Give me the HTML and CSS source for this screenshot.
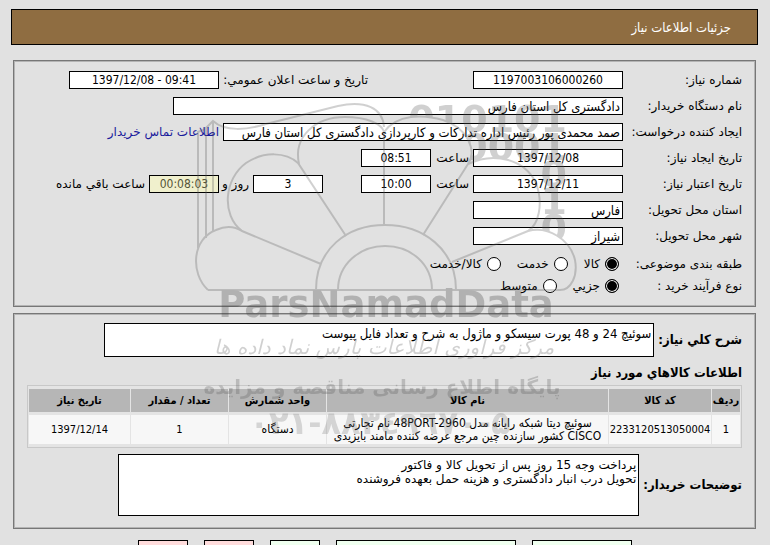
FILE: index.html
```html
<!DOCTYPE html>
<html lang="fa" dir="rtl">
<head>
<meta charset="utf-8">
<title>جزئیات اطلاعات نیاز</title>
<link rel="stylesheet" href="styles.css">
</head>
<body>
<header class="banner"><h1>جزئیات اطلاعات نیاز</h1></header>
<main>
<section class="panel form">
  <div class="row">
    <label class="name" for="number">شماره نیاز:</label>
    <input class="date" id="number" value="1197003106000260" dir="ltr" readonly>
    <label class="announce" for="announced">تاریخ و ساعت اعلان عمومي:</label>
    <input class="date" id="announced" value="1397/12/08 - 09:41" dir="ltr" readonly>
  </div>
  <div class="row">
    <label class="name" for="buyer">نام دستگاه خریدار:</label>
    <input class="buyer" id="buyer" value="دادگستری کل استان فارس" readonly>
  </div>
  <div class="row">
    <label class="name" for="creator">ایجاد کننده درخواست:</label>
    <input class="creator" id="creator" value="صمد محمدی پور رئیس اداره تدارکات و کارپردازی دادگستری کل استان فارس" readonly>
    <a href="#contact">اطلاعات تماس خریدار</a>
  </div>
  <div class="row">
    <label class="name" for="created">تاریخ ایجاد نیاز:</label>
    <input class="date" id="created" value="1397/12/08" dir="ltr" readonly>
    <label class="hour" for="created-hour">ساعت</label>
    <input class="time" id="created-hour" value="08:51" dir="ltr" readonly>
  </div>
  <div class="row">
    <label class="name" for="valid">تاریخ اعتبار نیاز:</label>
    <input class="date" id="valid" value="1397/12/11" dir="ltr" readonly>
    <label class="hour" for="valid-hour">ساعت</label>
    <input class="time" id="valid-hour" value="10:00" dir="ltr" readonly>
    <input class="time days" id="days" value="3" dir="ltr" readonly>
    <label class="and" for="days">روز و</label>
    <input class="time left" id="left" value="00:08:03" dir="ltr" readonly>
    <label for="left">ساعت باقي مانده</label>
  </div>
  <div class="row">
    <label class="name" for="province">استان محل تحویل:</label>
    <input class="place" id="province" value="فارس" readonly>
  </div>
  <div class="row">
    <label class="name" for="city">شهر محل تحویل:</label>
    <input class="place" id="city" value="شیراز" readonly>
  </div>
  <div class="row options">
    <span class="name">طبقه بندی موضوعی:</span>
    <label><input type="radio" name="category" checked>کالا</label>
    <label><input type="radio" name="category">خدمت</label>
    <label><input type="radio" name="category">کالا/خدمت</label>
  </div>
  <div class="row options">
    <span class="name">نوع فرآیند خرید :</span>
    <label><input type="radio" name="process" checked>جزيي</label>
    <label><input type="radio" name="process">متوسط</label>
  </div>
</section>
<section class="panel details">
  <div class="block">
    <label for="summary">شرح کلي نیاز:</label>
    <textarea class="summary" id="summary" readonly>سوئیچ 24 و 48 پورت سیسکو و ماژول به شرح و تعداد فایل پیوست</textarea>
  </div>
  <h2>اطلاعات کالاهاي مورد نیاز</h2>
  <table>
    <colgroup><col class="c-row"><col class="c-code"><col><col class="c-std"><col class="c-std"><col class="c-last"></colgroup>
    <thead><tr><th>ردیف</th><th>کد کالا</th><th>نام کالا</th><th>واحد شمارش</th><th>تعداد / مقدار</th><th>تاریخ نیاز</th></tr></thead>
    <tbody><tr><td>1</td><td>2233120513050004</td><td class="item">سوئیچ دیتا شبکه رایانه مدل 48PORT-2960 نام تجارتی CISCO کشور سازنده چین مرجع عرضه کننده مامند بایزیدی</td><td class="item">دستگاه</td><td>1</td><td>1397/12/14</td></tr></tbody>
  </table>
  <div class="block">
    <label for="notes">توضیحات خریدار:</label>
    <textarea class="notes" id="notes" readonly>پرداخت وجه 15 روز پس از تحویل کالا و فاکتور
تحویل درب انبار دادگستری و هزینه حمل بعهده فروشنده</textarea>
  </div>
</section>
</main>
<footer class="actions">
  <button class="go medium" type="button"></button>
  <button class="go wide" type="button"></button>
  <button class="go" type="button"></button>
  <button class="stop" type="button"></button>
  <button class="stop" type="button"></button>
</footer>
<svg class="watermark" viewBox="190 95 390 355" direction="ltr" aria-hidden="true">
  <mask id="behind" maskUnits="userSpaceOnUse" x="190" y="95" width="390" height="200">
    <rect x="190" y="95" width="390" height="200" fill="#fff"/>
    <path fill="#000" d="M384 132C397 114 423 114 443 120C468 128 477 151 468 164C495 151 525 160 536 183C544 205 538 225 528 231C548 226 570 239 575 260V290H384Z"/>
  </mask>
  <g class="lines">
    <path d="M198 248V132L205 129M206 238V127M213 232V121M205 129L213 121C225 132 247 130 266 124L338 106C365 100 383 108 384 127"/>
    <path d="M208 290C190 273 192 239 216 230C225 226 234 226 242 231L321 264"/>
    <path d="M242 231C221 215 224 179 246 163C264 151 286 152 298 163L346 236"/>
    <path d="M299 164C293 137 315 117 345 117C367 117 382 124 384 132V225"/>
    <path d="M384 132C397 114 423 114 443 120C468 128 477 151 468 164L423 235"/>
    <path d="M468 164C495 151 525 160 536 183C544 205 538 225 528 231L452 262"/>
    <path d="M528 231C548 226 570 239 575 260C578 276 571 290 560 290H208"/>
    <path d="M316 290C316 249 347 225 385 225C423 225 456 249 456 290"/>
    <path d="M338 290C338 264 360 246 385 246C411 246 432 264 432 290"/>
  </g>
  <g class="digits" mask="url(#behind)">
    <text x="567" y="132">010101</text><text x="567" y="160">0001</text>
    <text x="567" y="187">0</text><text x="567" y="214">1</text><text x="567" y="241">0</text>
  </g>
  <text class="brand" x="386" y="317">ParsNamadData</text>
  <text class="script" x="384" y="354">مرکز فرآوری اطلاعات پارس نماد داده ها</text>
  <text class="tag" x="382" y="394">پایگاه اطلاع رسانی مناقصه و مزایده</text>
  <text class="phone" x="380" y="434">۰۲۱-۸۸۳٤۹٦۷۰-۵</text>
</svg>
</body>
</html>
```
FILE: styles.css
```css
* { box-sizing: border-box; }
html { overflow: hidden; }
body {
  margin: 0;
  padding: 9px 12px 0 11px;
  position: relative;
  background: #e1e1e1;
  color: #000;
  font: 12px/14px "DejaVu Sans", sans-serif;
}
input, textarea, button { font: inherit; color: inherit; border-radius: 0; }
.banner {
  height: 36px;
  padding: 2px 26px 0;
  display: flex;
  align-items: center;
  background: #8f6d41;
  border: 1px solid #000;
  color: #fff;
}
.banner h1 { margin: 0; font: 13px/16px "DejaVu Sans Condensed", sans-serif; }
main { padding: 15px 2px 0; display: grid; gap: 6px; }
.panel { border: 1px solid #777; outline: 1px solid #b4b4b4; outline-offset: -2px; }
.form { padding: 10px 13px 9px; }
.row { display: flex; align-items: center; gap: 4px; min-height: 26px; padding-bottom: 8px; white-space: nowrap; }
.row > .name { width: 115px; }
.row input:not([type]) {
  height: 18px;
  padding: 0 2px;
  border: 1px solid #000;
  background: #fff;
  font: 12px/14px "DejaVu Sans Condensed", sans-serif;
  text-align: center;
}
.row .date { width: 150px; }
.row .time { width: 70px; }
.row .buyer, .row .creator, .row .place { font-size: 13px !important; text-align: right !important; }
.row .buyer { width: 450px; }
.row .creator { width: 400px; }
.row .place { width: 150px; }
.row .hour { width: 34px; }
.row .and { width: 26px; }
.row .days { margin-right: 34px; }
.row .announce { width: 145px; margin-right: 101px; }
.row .left { background: #f0f0cd !important; color: #555538; }
a { color: #1a1a9c; text-decoration: none; }
.row.options { min-height: 22px; padding: 0; gap: 16px; }
.options > .name { width: 107px; }
.options label { display: flex; align-items: center; gap: 5px; }
.options input {
  appearance: none;
  width: 14px;
  height: 14px;
  margin: 0;
  border: 1px solid #000;
  border-radius: 50%;
  background: #fff;
}
.options input:checked { background: #000; box-shadow: inset 0 0 0 1px #fff; }
.details { padding: 9px 13px 12px; }
.block { display: flex; align-items: center; gap: 4px; }
.block label, h2 { font: bold 13px/14px "DejaVu Sans Condensed", sans-serif; }
textarea {
  margin: 0;
  padding: 3px 2px;
  border: 1px solid #000;
  background: #fff;
  resize: none;
  overflow: hidden;
}
.summary { width: 550px; height: 34px; font: 13px/14px "DejaVu Sans Condensed", sans-serif; }
.notes { width: 521px; height: 62px; }
h2 { margin: 9px 0 5px; }
table {
  width: 100%;
  margin-bottom: 6px;
  table-layout: fixed;
  border-collapse: separate;
  border-spacing: 1px 3px;
  border: 1px solid #c8c8c8;
  background: #e4e4e4;
  font: 11px/13px "DejaVu Sans Condensed", sans-serif;
}
th, td { padding: 0; text-align: center; border: 0; }
th { height: 23px; background: #b6b6b6; }
td { height: 29px; background: #f7f7f7; }
.item { font-size: 12px; }
.c-row { width: 28px; }
.c-code { width: 102px; }
.c-std { width: 97px; }
.c-last { width: 101px; }
.actions { display: flex; justify-content: center; gap: 16px; padding-top: 11px; }
.actions button { width: 50px; height: 22px; padding: 0; border: 1px solid #000; }
.actions .medium { width: 100px; }
.actions .wide { width: 180px; }
.actions .go { background: #efffef; }
.actions .stop { background: #ffdcdc; }
.watermark { position: absolute; top: 95px; left: 190px; width: 390px; height: 355px; pointer-events: none; opacity: 0.27; }
.lines { fill: none; stroke: #555; stroke-width: 2; }
.digits { font: bold 38px "DejaVu Sans", sans-serif; fill: #555; text-anchor: end; }
.brand { font: bold 37px "DejaVu Sans", sans-serif; fill: #333; text-anchor: middle; }
.script { font: italic 20px "DejaVu Sans", sans-serif; fill: #555; text-anchor: middle; }
.tag { font: bold 20px "DejaVu Sans", sans-serif; fill: #555; text-anchor: middle; }
.phone { font: bold 32px "DejaVu Sans", sans-serif; fill: #777; text-anchor: middle; }
```
